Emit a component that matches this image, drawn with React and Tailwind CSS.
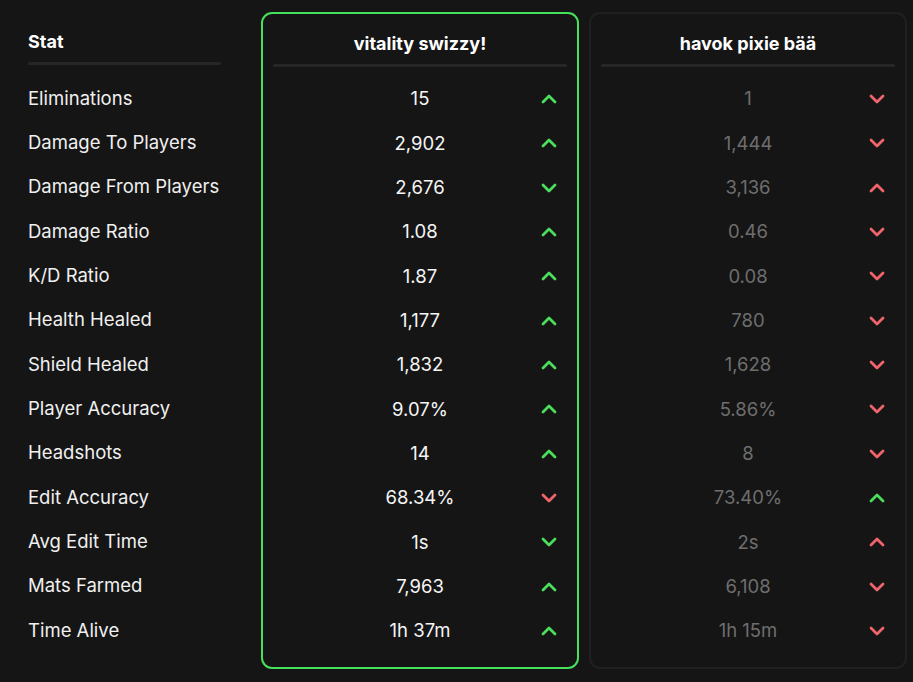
import React from 'react';

// label, p1 value, p1 arrow, p2 value, p2 arrow, who won the stat
const stats = [
  ['Eliminations', '15', 'up', '1', 'down', 1],
  ['Damage To Players', '2,902', 'up', '1,444', 'down', 1],
  ['Damage From Players', '2,676', 'down', '3,136', 'up', 1],
  ['Damage Ratio', '1.08', 'up', '0.46', 'down', 1],
  ['K/D Ratio', '1.87', 'up', '0.08', 'down', 1],
  ['Health Healed', '1,177', 'up', '780', 'down', 1],
  ['Shield Healed', '1,832', 'up', '1,628', 'down', 1],
  ['Player Accuracy', '9.07%', 'up', '5.86%', 'down', 1],
  ['Headshots', '14', 'up', '8', 'down', 1],
  ['Edit Accuracy', '68.34%', 'down', '73.40%', 'up', 2],
  ['Avg Edit Time', '1s', 'down', '2s', 'up', 1],
  ['Mats Farmed', '7,963', 'up', '6,108', 'down', 1],
  ['Time Alive', '1h 37m', 'up', '1h 15m', 'down', 1],
];

const Chevron = ({ dir, good }) => (
  <svg width="24" height="24" viewBox="0 0 24 24" fill="none"
    stroke={good ? '#4ade5c' : '#f0646c'} strokeWidth="2.8"
    strokeLinecap="round" strokeLinejoin="round">
    {dir === 'up' ? <path d="m18 15-6-6-6 6" /> : <path d="m6 9 6 6 6-6" />}
  </svg>
);

const PlayerCard = ({ name, winner, col, player }) => (
  <div className={`w-[318px] rounded-[11px] border-2 pb-[14px] ${winner ? 'border-[#46e05a]' : 'border-[#202020]'}`}>
    <div className="px-[10px]">
      <div className="pt-[16px] pb-[6px] text-center text-[18px] leading-[28px] font-bold text-white">{name}</div>
      <div className="h-[3px] bg-[#262626] rounded-full" />
    </div>
    <div className="mt-[10px] px-[12px]">
      {stats.map((s) => (
        <div key={s[0]} className="h-[44.33px] grid grid-cols-[32px_1fr_32px] items-center">
          <div />
          <div className={`text-center text-[18.5px] ${winner ? 'text-[#f5f5f5]' : 'text-[#6e6e6e]'}`}>{s[col]}</div>
          <div className="flex justify-center">
            <Chevron dir={s[col + 1]} good={s[5] === player} />
          </div>
        </div>
      ))}
    </div>
  </div>
);

export default function App() {
  return (
    <div className="min-h-screen w-full bg-[#151515] font-['Inter',sans-serif]">
      <div className="flex pt-[12px] pl-[28px]">
        <div className="w-[193px] shrink-0">
          <div className="pt-[16px] pb-[6px] text-[18px] leading-[28px] font-bold text-white">Stat</div>
          <div className="h-[3px] bg-[#262626] rounded-full" />
          <div className="mt-[10px]">
            {stats.map((s) => (
              <div key={s[0]} className="h-[44.33px] pt-[3px] flex items-center whitespace-nowrap text-[18.5px] text-[#f0f0f0]">{s[0]}</div>
            ))}
          </div>
        </div>
        <div className="ml-[40px] flex gap-[10px]">
          <PlayerCard name="vitality swizzy!" winner col={1} player={1} />
          <PlayerCard name="havok pixie bää" col={3} player={2} />
        </div>
      </div>
    </div>
  );
}
